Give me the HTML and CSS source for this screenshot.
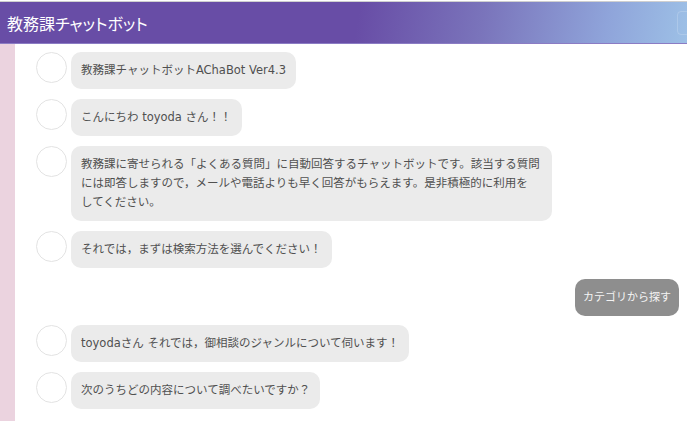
FILE: index.html
```html
<!DOCTYPE html>
<html lang="ja">
<head>
<meta charset="utf-8">
<title>教務課チャットボット</title>
<link rel="stylesheet" href="styles.css">
</head>
<body>
<header class="topbar">
  <h1 class="title">教務課チャットボット</h1>
  <button class="toggler" aria-label="menu"><span></span><span></span><span></span></button>
</header>
<div class="main">
  <aside class="side"></aside>
  <section class="chat">
    <div class="msg bot"><div class="avatar"></div><div class="bubble">教務課チャットボットAChaBot Ver4.3</div></div>
    <div class="msg bot"><div class="avatar"></div><div class="bubble">こんにちわ toyoda さん！！</div></div>
    <div class="msg bot"><div class="avatar"></div><div class="bubble">教務課に寄せられる「よくある質問」に自動回答するチャットボットです。該当する質問には即答しますので，メールや電話よりも早く回答がもらえます。是非積極的に利用を<span class="nowrap">して</span>ください。</div></div>
    <div class="msg bot"><div class="avatar"></div><div class="bubble">それでは，まずは検索方法を選んでください！</div></div>
    <div class="msg user"><div class="bubble">カテゴリから探す</div></div>
    <div class="msg bot"><div class="avatar"></div><div class="bubble">toyodaさん それでは，御相談のジャンルについて伺います！</div></div>
    <div class="msg bot"><div class="avatar"></div><div class="bubble">次のうちどの内容について調べたいですか？</div></div>
  </section>
</div>
</body>
</html>
```
FILE: styles.css
```css
* { box-sizing: border-box; }
html, body { margin: 0; padding: 0; height: 100%; overflow: hidden; }
body {
  font-family: "DejaVu Sans", "Noto Sans CJK JP", sans-serif;
  color: #555;
  background: #fff;
  display: flex;
  flex-direction: column;
}
.topbar {
  margin-top: 1px;
  height: 43px;
  flex: none;
  display: flex;
  align-items: center;
  justify-content: space-between;
  background: linear-gradient(100deg, #684da6 0%, #684da6 52%, #7a74bb 70%, #8fa4da 88%, #9dc0e6 100%);
  border-top: 1px solid #cfcfcf;
  border-bottom: 1px solid #8b7cc4;
  overflow: hidden;
  padding-left: 7px;
}
.title {
  margin: 0;
  font-family: "Noto Sans CJK JP", sans-serif;
  font-feature-settings: "palt";
  font-size: 16px;
  font-weight: 400;
  color: #fff;
  line-height: 1;
}
.toggler {
  width: 30px;
  height: 24px;
  margin-right: -20px;
  border: 1px solid rgba(255,255,255,0.18);
  border-radius: 4px;
  background: transparent;
  display: flex;
  flex-direction: column;
  justify-content: center;
  align-items: flex-start;
  gap: 3px;
  padding: 0 0 0 9px;
}
.toggler span {
  width: 3px;
  height: 2px;
  background: rgba(255,255,255,0.8);
}
.main {
  flex: 1;
  display: flex;
  min-height: 0;
}
.side {
  width: 15px;
  flex: none;
  background: #ebd3df;
}
.chat {
  flex: 1;
  padding: 8px 8px 0 21px;
  display: flex;
  flex-direction: column;
  gap: 10px;
}
.msg {
  display: flex;
  align-items: flex-start;
  gap: 4px;
}
.msg.user { justify-content: flex-end; margin-top: 1px; margin-bottom: -1px; }
.avatar {
  width: 31px;
  height: 31px;
  flex: none;
  border: 1px solid #e3e3e3;
  border-radius: 50%;
  background: #fff;
}
.bubble {
  background: #ebebeb;
  border-radius: 10px;
  padding: 9px 10px;
  font-size: 11.5px;
  line-height: 19px;
  max-width: 481px;
  color: #505050;
}
.nowrap { white-space: nowrap; }
.user .bubble {
  background: #8e8e8e;
  color: #f4f4f4;
  font-size: 11px;
  padding: 9px 8px;
}
```
